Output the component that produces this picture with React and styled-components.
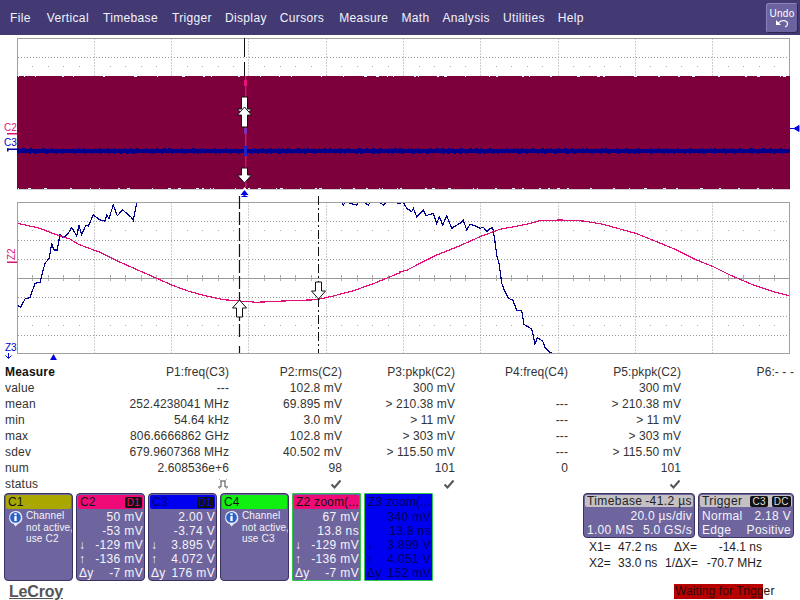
import React from 'react'
import styled, { createGlobalStyle } from 'styled-components'

const GlobalStyle = createGlobalStyle`
  html, body {
    margin: 0;
    padding: 0;
    background: #fff;
  }
  body {
    font-family: "Liberation Sans", Arial, sans-serif;
  }
`

const Screen = styled.div`
  width: 800px;
  height: 600px;
  overflow: hidden;
  display: flex;
  flex-direction: column;
  color: #333;
`

const MenuBar = styled.div`
  height: 35px;
  flex: none;
  display: flex;
  align-items: center;
  background: #433a74;
  padding-left: 10px;
`

const MenuItem = styled.span`
  color: #f2f2f8;
  font-size: 12px;
  letter-spacing: 0.35px;
  margin-right: ${({ $gap }) => $gap}px;
`

const UndoButton = styled.div`
  margin-left: auto;
  margin-right: 2px;
  width: 32px;
  height: 30px;
  box-sizing: border-box;
  background: #6b62a0;
  border: 1px solid #8a82b8;
  border-right-color: #2e2758;
  border-bottom-color: #2e2758;
  border-radius: 3px;
  color: #fff;
  font-size: 10px;
  letter-spacing: 0.3px;
  display: flex;
  flex-direction: column;
  align-items: center;
  padding-top: 4px;
  line-height: 11px;
`

const ScopeSvg = styled.svg`
  display: block;
  flex: none;
  width: 800px;
  height: ${({ $h }) => $h}px;
`

const MeasureTable = styled.div`
  flex: none;
  display: grid;
  grid-template-columns: 111px repeat(6, 113px);
  grid-auto-rows: 16px;
  padding: 4px 0 0 5px;
  font-size: 12px;
  line-height: 16px;
`

const RowLabel = styled.div`
  font-weight: ${({ $bold }) => ($bold ? 700 : 400)};
  color: ${({ $bold }) => ($bold ? '#111' : '#333')};
  letter-spacing: 0.2px;
`

const Cell = styled.div`
  text-align: right;
  white-space: nowrap;
  letter-spacing: 0.1px;
  display: flex;
  justify-content: flex-end;
  align-items: center;
`

const Bottom = styled.div`
  flex: none;
  display: flex;
  justify-content: space-between;
  height: 107px;
  margin-top: 1px;
`

const LeftSide = styled.div`
  display: flex;
  flex-direction: column;
  padding-left: 4px;
`

const Panels = styled.div`
  display: flex;
  gap: 3px;
`

const Panel = styled.div`
  width: 69px;
  height: 88px;
  box-sizing: border-box;
  background: ${({ $bg }) => $bg || '#6f659e'};
  border: 1px solid ${({ $zoom }) => ($zoom ? '#2fc84a' : '#3a3364')};
  border-radius: ${({ $zoom }) => ($zoom ? 1 : 4)}px;
  padding: 1px;
  color: ${({ $dark }) => ($dark ? '#00005a' : '#f4f4fa')};
  font-size: 12px;
  overflow: hidden;
`

const PanelHead = styled.div`
  height: 14px;
  display: flex;
  justify-content: space-between;
  align-items: center;
  background: ${({ $bg }) => $bg};
  color: ${({ $color }) => $color || '#111'};
  border-radius: 2px;
  padding: 0 1px 0 2px;
  font-size: 12px;
  line-height: 14px;
  letter-spacing: 0.2px;
  white-space: nowrap;
  overflow: hidden;
`

const Badge = styled.span`
  background: #111;
  color: ${({ $color }) => $color || '#ddd'};
  font-size: 10px;
  line-height: 11px;
  padding: 0 2px;
  border-radius: 2px;
`

const NoticeBody = styled.div`
  display: flex;
  padding: 1px 0 0 1px;
  gap: 2px;
`

const NoticeText = styled.div`
  font-size: 10px;
  line-height: 11.5px;
  letter-spacing: 0.15px;
  white-space: nowrap;
`

const Readouts = styled.div`
  margin-top: 1px;
`

const Readout = styled.div`
  display: flex;
  justify-content: space-between;
  height: 14px;
  line-height: 14px;
  padding: 0 0 0 1px;
  letter-spacing: 0.35px;
  white-space: nowrap;
`

const Logo = styled.div`
  font-size: 16px;
  font-weight: 700;
  color: #555;
  text-decoration: underline;
  letter-spacing: -0.2px;
  margin: 1px 0 0 5px;
  line-height: 20px;
`

const RightSide = styled.div`
  width: 217px;
  display: flex;
  flex-direction: column;
`

const InfoRow = styled.div`
  display: flex;
  gap: 3px;
`

const InfoBox = styled.div`
  width: ${({ $w }) => $w}px;
  height: 45px;
  box-sizing: border-box;
  background: #6f659e;
  border: 1px solid #3a3364;
  border-radius: 4px;
  padding: 1px;
  color: #f4f4fa;
  font-size: 12px;
  overflow: hidden;
`

const InfoHead = styled.div`
  height: 12px;
  margin-bottom: 2px;
  display: flex;
  justify-content: space-between;
  align-items: center;
  background: #c4c0c4;
  color: #222;
  border-radius: 2px;
  padding: 0 1px 0 2px;
  letter-spacing: 0.4px;
  white-space: nowrap;
`

const InfoLine = styled.div`
  display: flex;
  justify-content: ${({ $end }) => ($end ? 'flex-end' : 'space-between')};
  height: 14px;
  line-height: 15px;
  padding: 0 1px 0 2px;
  letter-spacing: 0.3px;
  white-space: nowrap;
`

const CursorGrid = styled.div`
  display: grid;
  grid-template-columns: 29px 47px 32px 65px;
  grid-auto-rows: 16px;
  margin: 1px 0 0 6px;
  font-size: 12px;
  line-height: 16px;
  color: #222;
  white-space: nowrap;
`

const CursorCell = styled.span`
  text-align: ${({ $right }) => ($right ? 'right' : 'left')};
`

const Waiting = styled.div`
  height: 15px;
  width: 88px;
  margin: 13px 0 0 91px;
  background: #b80000;
  font-size: 12px;
  line-height: 15px;
  color: #2b0a0a;
  padding-left: 1px;
  letter-spacing: 0.1px;
  white-space: nowrap;
`

const GridX = [94.5, 171.5, 248.5, 326.5, 403.5, 480.5, 558.5, 635.5, 712.5]

function toPoints(raw, offset, baseY) {
  return raw.map(([x, y]) => `${(x / 3 + offset).toFixed(1)},${(y / 3 + baseY).toFixed(1)}`).join(' ')
}

const pinkLine = [
  ...[[52,85],[120,100],[165,118],[210,132],[235,148],[300,172],[350,197],[420,228],[470,250],[520,272],[570,290],[620,303],[670,314],[720,318],[770,322],[850,318],[950,314],[1000,303],[1060,287],[1120,266],[1200,233]],
  ...[[0,230],[20,226],[60,205],[110,180],[180,152],[240,125],[300,103],[380,88],[420,77],[480,75],[550,78],[610,88],[660,102],[710,116],[770,140],[830,165],[890,195],[940,215],[990,240],[1060,270],[1120,290],[1168,302]].map(([x, y]) => [x + 1200, y])
]

const blueLine = [
  ...[[52,330],[62,337],[75,312],[90,308],[105,265],[120,262],[135,205],[148,190],[155,145],[162,165],[172,165],[180,118],[190,128],[205,115],[215,98],[230,122],[237,92],[245,118],[258,90],[265,93],[280,60],[300,75],[315,78],[320,60],[327,70],[340,30],[352,62],[368,45],[395,68],[400,76],[410,25],[415,15],[440,-20],[1010,-20],[1030,30],[1040,15],[1050,25],[1070,30],[1080,15],[1105,30],[1115,15],[1130,15],[1150,30],[1165,15],[1195,25]],
  ...[[0,25],[10,22],[20,40],[35,50],[40,40],[50,65],[70,45],[78,62],[100,55],[110,85],[118,65],[128,90],[140,62],[155,100],[180,85],[190,75],[200,105],[210,88],[225,92],[240,100],[250,97],[262,110],[270,100],[278,98],[285,140],[290,180],[298,210],[305,265],[315,290],[325,310],[338,315],[350,345],[365,348],[372,388],[395,402],[405,447],[412,428],[428,438],[435,458],[450,472],[462,476]].map(([x, y]) => [x + 1200, y])
]

// fixed pseudo random so the noise on the trace edges is the same on every load
function noise(seed) {
  let s = seed
  return () => {
    s = (s * 16807) % 2147483647
    return s / 2147483647
  }
}

function edgeSpecks(y, color, seed, maxGap = 9) {
  const rnd = noise(seed)
  const out = []
  let x = 18
  while (x < 786) {
    const w = 1 + Math.floor(rnd() * 3)
    out.push(<rect key={x} x={x} y={y} width={w} height={1} fill={color} />)
    x += w + 2 + Math.floor(rnd() * maxGap)
  }
  return out
}

function GridLines({ top, bottom, rows, solidRow }) {
  return (
    <g>
      {GridX.map(x => (
        <line key={x} x1={x} x2={x} y1={top} y2={bottom} stroke="#999" strokeDasharray="1 2" />
      ))}
      {rows.map(y => (
        <line key={y} x1={18} x2={789} y1={y} y2={y} stroke="#999" strokeDasharray={y === solidRow ? undefined : '1 2'} />
      ))}
      <rect x={17.5} y={top} width={772} height={bottom - top} fill="none" stroke="#a0a0a0" />
    </g>
  )
}

function Ticks({ y, h = 1, color = '#aaa' }) {
  const out = []
  for (let i = 0; i < 50; i++) {
    const x = Math.round(17 + i * 15.45)
    if (i % 5 === 0) continue
    out.push(<rect key={i} x={x} y={y} width={1} height={h} fill={color} />)
  }
  return out
}

function DownArrow({ x, tip, len = 17 }) {
  return (
    <path
      d={`M${x - 3} ${tip - len} h6 v${len - 8} h4 L${x} ${tip} L${x - 7} ${tip - 8} h4 z`}
      fill="#fff"
      stroke="#111"
    />
  )
}

function UpArrow({ x, tip, len = 17 }) {
  return (
    <path
      d={`M${x - 3} ${tip + len} h6 v-${len - 8} h4 L${x} ${tip} L${x - 7} ${tip + 8} h4 z`}
      fill="#fff"
      stroke="#111"
    />
  )
}

function UpperPlot() {
  return (
    <ScopeSvg $h={160} viewBox="0 35 800 160">
      <GridLines top={38.5} bottom={189} rows={[57.5]} />
      <Ticks y={66} />
      <rect x={17} y={76} width={773} height={113} fill="#7d003c" />
      {edgeSpecks(76, '#fff', 77, 28)}
      {edgeSpecks(188, '#fff', 991, 22)}
      <rect x={17} y={149} width={773} height={4} fill="#00008f" />
      {edgeSpecks(148, '#00008f', 123)}
      {edgeSpecks(153, '#00008f', 456)}
      <line x1={244.5} x2={244.5} y1={38} y2={57} stroke="#111" />
      <line x1={244.5} x2={244.5} y1={62} y2={76} stroke="#111" />
      <rect x={245} y={76} width={1.5} height={112} fill="#d01070" />
      <rect x={244} y={80} width={3} height={6} fill="#e8107a" />
      <rect x={244} y={128} width={3} height={6} fill="#8030b0" />
      <rect x={244} y={146} width={3} height={10} fill="#2020c0" />
      <DownArrow x={244.5} tip={117} len={20} />
      <UpArrow x={244.5} tip={107} len={20} />
      <DownArrow x={244.5} tip={183} len={15} />
      <path d="M244.5 187 L250 195 L239 195 Z" fill="#fff" />
      <path d="M244.5 190 L248.5 195 L240.5 195 Z" fill="#0000e0" />
      <text x={4} y={131} fontSize="10" fill="#e0107a" fontFamily="Liberation Sans">C2</text>
      <rect x={7} y={133} width={10} height={1.5} fill="#e0107a" />
      <text x={4} y={146} fontSize="10" fill="#0000d0" fontFamily="Liberation Sans">C3</text>
      <rect x={7} y={148.5} width={10} height={1.5} fill="#0000a0" />
      <rect x={7} y={148.5} width={1.5} height={3} fill="#0000a0" />
      <path d="M790 128.5 h4 l5 -3 v6 l-5 -3" fill="#0000e0" stroke="#0000e0" />
    </ScopeSvg>
  )
}

function LowerPlot() {
  return (
    <ScopeSvg $h={165} viewBox="0 195 800 165">
      <defs>
        <clipPath id="lowerClip">
          <rect x={18} y={203} width={771} height={150} />
        </clipPath>
      </defs>
      <GridLines top={202.5} bottom={353.5} rows={[221.5, 240.5, 259.5, 278.5, 297.5, 316.5, 335.5]} solidRow={278.5} />
      <Ticks y={230} />
      <Ticks y={325} />
      <Ticks y={275} h={6} />
      <g clipPath="url(#lowerClip)" shapeRendering="crispEdges">
        <polyline points={toPoints(blueLine, 0, 195)} fill="none" stroke="#00008f" strokeWidth="1.2" />
        <polyline points={toPoints(pinkLine, 0, 195)} fill="none" stroke="#e0107a" strokeWidth="1.2" />
      </g>
      <line x1={239.5} x2={239.5} y1={196} y2={340} stroke="#111" strokeWidth="1.2" strokeDasharray="13 3" />
      <line x1={239.5} x2={239.5} y1={346} y2={353} stroke="#111" strokeWidth="1.2" />
      <line x1={318.5} x2={318.5} y1={196} y2={353} stroke="#111" strokeDasharray="9 3 2 3" />
      <UpArrow x={239.5} tip={300} />
      <DownArrow x={318.5} tip={299} />
      <path d="M244.5 195 L248.5 197 L240.5 197 Z" fill="#0000e0" />
      <path d="M53.5 354 L57.5 361 L49.5 361 Z" fill="#0000e0" />
      <text transform="translate(14.5 260) rotate(-90)" fontSize="10" fill="#e0107a" fontFamily="Liberation Sans">Z2</text>
      <rect x={7} y={261.5} width={10} height={1.5} fill="#e0107a" />
      <text x={5} y={351} fontSize="10" fill="#0000d0" fontFamily="Liberation Sans">Z3</text>
      <path d="M8.5 353 v5 M5.5 355.5 L8.5 358.5 L11.5 355.5" fill="none" stroke="#0000d0" />
    </ScopeSvg>
  )
}

function CheckMark() {
  return (
    <svg width="12" height="10" viewBox="0 0 12 10">
      <path d="M1.5 5.5 L4.5 8.5 L10.5 1.5" fill="none" stroke="#555" strokeWidth="2" />
    </svg>
  )
}

function PulseIcon() {
  return (
    <svg width="12" height="12" viewBox="0 0 12 12">
      <path d="M1 9 h3 V3 h4 v6 h3" fill="none" stroke="#444" />
      <path d="M2 1 L4 3 M10 1 L8 3 M2 11 L4 9 M10 11 L8 9" stroke="#aaa" />
    </svg>
  )
}

function InfoIcon() {
  return (
    <svg width="17" height="17" viewBox="0 0 17 19" style={{ flex: 'none' }}>
      <path d="M8.5 1 a7.5 7.5 0 0 1 3 14.4 L8.5 18.5 L6.5 15.6 A7.5 7.5 0 0 1 8.5 1 Z" fill="#e8eefa" />
      <circle cx="8.5" cy="8.3" r="6" fill="#2c62c8" />
      <rect x="7.2" y="3.6" width="2.6" height="2.2" fill="#fff" />
      <rect x="7.2" y="6.8" width="2.6" height="5.6" fill="#fff" />
    </svg>
  )
}

function UndoIcon() {
  return (
    <svg width="14" height="9" viewBox="0 0 14 9">
      <path d="M1 1 v5 h5 z" fill="#fff" />
      <path d="M3.5 4 C6 0.5 12.5 1 12.5 5 C12.5 6.5 11.5 7.5 10 8" fill="none" stroke="#fff" strokeWidth="1.2" />
    </svg>
  )
}

const menu = [
  ['File', 16], ['Vertical', 14], ['Timebase', 14], ['Trigger', 13], ['Display', 13],
  ['Cursors', 15], ['Measure', 13], ['Math', 13], ['Analysis', 13], ['Utilities', 13], ['Help', 0]
]

const measureHead = ['P1:freq(C3)', 'P2:rms(C2)', 'P3:pkpk(C2)', 'P4:freq(C4)', 'P5:pkpk(C2)', 'P6:- - -']

const measureRows = [
  ['value', '---', '102.8 mV', '300 mV', '', '300 mV', ''],
  ['mean', '252.4238041 MHz', '69.895 mV', '> 210.38 mV', '---', '> 210.38 mV', ''],
  ['min', '54.64 kHz', '3.0 mV', '> 11 mV', '---', '> 11 mV', ''],
  ['max', '806.6666862 GHz', '102.8 mV', '> 303 mV', '---', '> 303 mV', ''],
  ['sdev', '679.9607368 MHz', '40.502 mV', '> 115.50 mV', '---', '> 115.50 mV', ''],
  ['num', '2.608536e+6', '98', '101', '0', '101', '']
]

function ChannelReadouts({ rows }) {
  return (
    <Readouts>
      {rows.map(([l, v], i) => (
        <Readout key={i}>
          <span>{l}</span>
          <span>{v}</span>
        </Readout>
      ))}
    </Readouts>
  )
}

function NoticePanel({ name, bg, use }) {
  return (
    <Panel>
      <PanelHead $bg={bg}>{name}</PanelHead>
      <NoticeBody>
        <InfoIcon />
        <NoticeText>
          Channel<br />not active,<br />use {use}
        </NoticeText>
      </NoticeBody>
    </Panel>
  )
}

export default function App() {
  return (
    <Screen>
      <GlobalStyle />
      <MenuBar>
        {menu.map(([label, gap]) => (
          <MenuItem key={label} $gap={gap}>{label}</MenuItem>
        ))}
        <UndoButton>
          Undo
          <UndoIcon />
        </UndoButton>
      </MenuBar>

      <UpperPlot />
      <LowerPlot />

      <MeasureTable>
        <RowLabel $bold>Measure</RowLabel>
        {measureHead.map(h => <Cell key={h}>{h}</Cell>)}
        {measureRows.map(row => (
          <React.Fragment key={row[0]}>
            <RowLabel>{row[0]}</RowLabel>
            {row.slice(1).map((v, i) => <Cell key={i}>{v}</Cell>)}
          </React.Fragment>
        ))}
        <RowLabel>status</RowLabel>
        <Cell><PulseIcon /></Cell>
        <Cell><CheckMark /></Cell>
        <Cell><CheckMark /></Cell>
        <Cell />
        <Cell><CheckMark /></Cell>
        <Cell />
      </MeasureTable>

      <Bottom>
        <LeftSide>
          <Panels>
            <NoticePanel name="C1" bg="#aaa800" use="C2" />
            <Panel>
              <PanelHead $bg="#f00a78"><span>C2</span><Badge $color="#f00a78">D1</Badge></PanelHead>
              <ChannelReadouts rows={[['', '50 mV'], ['', '-53 mV'], ['↓', '-129 mV'], ['↑', '-136 mV'], ['Δy', '-7 mV']]} />
            </Panel>
            <Panel>
              <PanelHead $bg="#0000f0" $color="#00006a"><span>C3</span><Badge $color="#0000f0">D1</Badge></PanelHead>
              <ChannelReadouts rows={[['', '2.00 V'], ['', '-3.74 V'], ['↓', '3.895 V'], ['↑', '4.072 V'], ['Δy', '176 mV']]} />
            </Panel>
            <NoticePanel name="C4" bg="#10f010" use="C3" />
            <Panel $zoom>
              <PanelHead $bg="#f00a78">Z2 zoom(...</PanelHead>
              <ChannelReadouts rows={[['', '67 mV'], ['', '13.8 ns'], ['↓', '-129 mV'], ['↑', '-136 mV'], ['Δy', '-7 mV']]} />
            </Panel>
            <Panel $zoom $bg="#0000f0" $dark>
              <PanelHead $bg="#0000f0" $color="#00005a">Z3 zoom(...</PanelHead>
              <ChannelReadouts rows={[['', '340 mV'], ['', '13.8 ns'], ['↓', '3.899 V'], ['↑', '4.051 V'], ['Δy', '152 mV']]} />
            </Panel>
          </Panels>
          <Logo>LeCroy</Logo>
        </LeftSide>

        <RightSide>
          <InfoRow>
            <InfoBox $w={112}>
              <InfoHead><span>Timebase</span><span>-41.2 µs</span></InfoHead>
              <InfoLine $end><span>20.0 µs/div</span></InfoLine>
              <InfoLine><span>1.00 MS</span><span>5.0 GS/s</span></InfoLine>
            </InfoBox>
            <InfoBox $w={96}>
              <InfoHead><span>Trigger</span><span><Badge>C3</Badge> <Badge>DC</Badge></span></InfoHead>
              <InfoLine><span>Normal</span><span>2.18 V</span></InfoLine>
              <InfoLine><span>Edge</span><span>Positive</span></InfoLine>
            </InfoBox>
          </InfoRow>
          <CursorGrid>
            <CursorCell>X1=</CursorCell>
            <CursorCell>47.2 ns</CursorCell>
            <CursorCell $right>ΔX=</CursorCell>
            <CursorCell $right>-14.1 ns</CursorCell>
            <CursorCell>X2=</CursorCell>
            <CursorCell>33.0 ns</CursorCell>
            <CursorCell $right>1/ΔX=</CursorCell>
            <CursorCell $right>-70.7 MHz</CursorCell>
          </CursorGrid>
          <Waiting>Waiting for Trigger</Waiting>
        </RightSide>
      </Bottom>
    </Screen>
  )
}
